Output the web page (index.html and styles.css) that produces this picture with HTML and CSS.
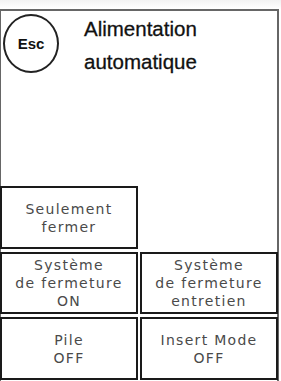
FILE: index.html
```html
<!DOCTYPE html>
<html>
<head>
<meta charset="utf-8">
<link rel="stylesheet" href="styles.css">
</head>
<body>
<div class="screen">
  <div class="frame">
    <div class="header">
      <div class="esc">Esc</div>
      <div class="title">Alimentation<br>automatique</div>
    </div>
    <div class="spacer"></div>
    <div class="grid">
      <div class="btn">Seulement<br>fermer</div>
      <div class="empty"></div>
      <div class="btn">Système<br>de fermeture<br>ON</div>
      <div class="btn">Système<br>de fermeture<br>entretien</div>
      <div class="btn">Pile<br>OFF</div>
      <div class="btn">Insert Mode<br>OFF</div>
    </div>
  </div>
</div>
</body>
</html>
```

FILE: styles.css
```css
html, body {
  margin: 0;
  padding: 0;
  background: #fff;
}
.screen {
  width: 281px;
  height: 381px;
  padding-top: 9px;
  box-sizing: border-box;
  display: flex;
  flex-direction: column;
  background: linear-gradient(#f2f2f2, #fff 9px);
}
.frame {
  flex: 1;
  width: 279px;
  border: 2px solid #666;
  border-bottom: none;
  border-left-width: 1px;
  box-sizing: border-box;
  display: flex;
  flex-direction: column;
  background: #fff;
}
.header {
  display: flex;
  align-items: flex-start;
  padding: 3px 0 0 2px;
}
.esc {
  width: 52px;
  height: 55px;
  border: 2px solid #222;
  border-radius: 50%;
  display: flex;
  align-items: center;
  justify-content: center;
  font-family: "Liberation Sans", Arial, sans-serif;
  font-weight: bold;
  font-size: 15px;
  color: #111;
  flex-shrink: 0;
}
.title {
  margin-left: 25px;
  margin-top: -2px;
  font-family: "Liberation Sans", Arial, sans-serif;
  font-size: 20.5px;
  line-height: 33px;
  color: #111;
  -webkit-text-stroke: 0.3px #111;
}
.spacer {
  flex: 1;
}
.grid {
  display: grid;
  grid-template-columns: 138px 138px;
  grid-template-rows: 63px 62px 63px;
  column-gap: 2px;
  row-gap: 3px;
  margin-left: -1px;
  margin-bottom: 1px;
}
.btn {
  border: 2px solid #1a1a1a;
  display: flex;
  align-items: center;
  justify-content: center;
  text-align: center;
  font-family: "DejaVu Sans", Verdana, sans-serif;
  font-size: 14px;
  letter-spacing: 1.3px;
  line-height: 18px;
  color: #4a4a4a;
  background: #fff;
}
```
